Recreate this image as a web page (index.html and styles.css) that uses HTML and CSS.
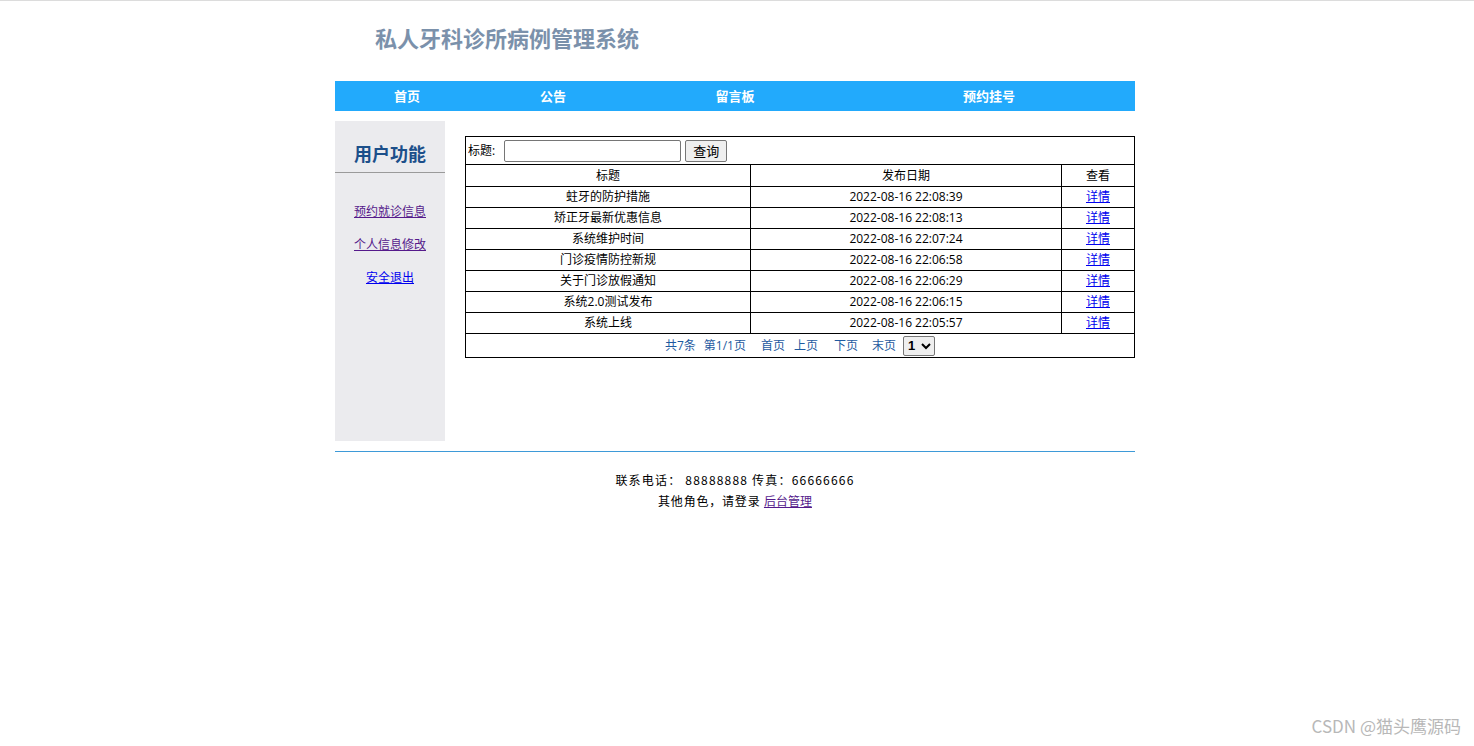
FILE: index.html
```html
<!DOCTYPE html>
<html lang="zh">
<head>
<meta charset="utf-8">
<title>私人牙科诊所病例管理系统</title>
<link rel="stylesheet" href="styles.css">
</head>
<body>
<div class="page">
  <div class="header"><h1 class="site-title">私人牙科诊所病例管理系统</h1></div>
  <div class="nav">
    <a class="nav-item n1" href="#">首页</a>
    <a class="nav-item n2" href="#">公告</a>
    <a class="nav-item n3" href="#">留言板</a>
    <a class="nav-item n4" href="#">预约挂号</a>
  </div>
  <div class="content">
    <div class="sidebar">
      <div class="side-title">用户功能</div>
      <div class="side-links">
        <a class="visited" href="#">预约就诊信息</a>
        <a class="visited" href="#">个人信息修改</a>
        <a class="fresh" href="#">安全退出</a>
      </div>
    </div>
    <div class="main">
      <table class="list">
        <tr class="search-row">
          <td colspan="3"><span class="lbl">标题:</span><input class="search-input" type="text"><button class="search-btn">查询</button></td>
        </tr>
        <tr class="head-row"><td class="c1">标题</td><td class="c2">发布日期</td><td class="c3">查看</td></tr>
        <tr><td>蛀牙的防护措施</td><td>2022-08-16 22:08:39</td><td><a href="#">详情</a></td></tr>
        <tr><td>矫正牙最新优惠信息</td><td>2022-08-16 22:08:13</td><td><a href="#">详情</a></td></tr>
        <tr><td>系统维护时间</td><td>2022-08-16 22:07:24</td><td><a href="#">详情</a></td></tr>
        <tr><td>门诊疫情防控新规</td><td>2022-08-16 22:06:58</td><td><a href="#">详情</a></td></tr>
        <tr><td>关于门诊放假通知</td><td>2022-08-16 22:06:29</td><td><a href="#">详情</a></td></tr>
        <tr><td>系统2.0测试发布</td><td>2022-08-16 22:06:15</td><td><a href="#">详情</a></td></tr>
        <tr><td>系统上线</td><td>2022-08-16 22:05:57</td><td><a href="#">详情</a></td></tr>
        <tr class="pager-row">
          <td colspan="3"><span class="pager"><span>共7条</span><span class="p2">第1/1页</span><span class="p3">首页</span><span class="p4">上页</span><span class="p5">下页</span><span class="p6">末页</span></span><select class="page-sel"><option>1</option></select></td>
        </tr>
      </table>
    </div>
  </div>
  <div class="footer">
    <p class="f1">联系电话： 88888888 传真：66666666</p>
    <p class="f2">其他角色，请登录 <a href="#">后台管理</a></p>
  </div>
</div>
<div class="watermark">CSDN @猫头鹰源码</div>
</body>
</html>
```
FILE: styles.css
```css
html, body { margin: 0; padding: 0; }
body {
  border-top: 1px solid #dcdcdc;
  font-family: "Noto Sans CJK SC", "Liberation Sans", sans-serif;
  font-size: 12px;
  color: #000;
  background: #fff;
  height: 745px;
  position: relative;
}
.page {
  width: 800px;
  margin-left: calc(50% - 402px);
}
.header {
  height: 80px;
  display: flex;
  align-items: flex-start;
}
.site-title {
  margin: 21px 0 0 40px;
  font-family: "Noto Sans CJK SC", serif;
  font-size: 22px;
  font-weight: bold;
  color: #7b91ab;
  line-height: 30px;
  letter-spacing: 0;
}
.nav {
  height: 30px;
  background: #22aafc;
  display: flex;
}
.nav-item {
  color: #fff;
  text-decoration: none;
  font-weight: bold;
  font-size: 13px;
  line-height: 29px;
  text-align: center;
}
.n1 { width: 144px; }
.n2 { width: 148px; }
.n3 { width: 216px; }
.n4 { width: 292px; }
.content {
  display: flex;
  margin-top: 10px;
  gap: 20px;
}
.sidebar {
  width: 110px;
  height: 320px;
  background: #ebebee;
}
.side-title {
  height: 51px;
  border-bottom: 1px solid #9a9a9a;
  text-align: center;
  font-size: 18px;
  font-weight: bold;
  color: #1c4f8a;
  line-height: 64px;
}
.side-links {
  display: flex;
  flex-direction: column;
  align-items: center;
  padding-top: 29px;
  gap: 15px;
}
.side-links a { font-size: 12px; line-height: 18px; }
.side-links .visited { color: #551a8b; }
.side-links .fresh { color: #0000ee; }
.main { padding-top: 15px; }
.list {
  width: 670px;
  border-collapse: collapse;
  border: 1px solid #000;
  font-family: "Open Sans", "Noto Sans CJK SC", sans-serif;
}
.list td {
  border: 1px solid #000;
  text-align: center;
  padding: 0;
  height: 20px;
  line-height: 18px;
  font-size: 12px;
}
.list a { color: #0000ee; }
.search-row td {
  text-align: left;
  height: 27px;
  padding-left: 2px;
}
.lbl { vertical-align: middle; margin-right: 9px; }
.search-input {
  width: 171px;
  height: 18px;
  border: 1px solid #767676;
  border-radius: 2px;
  margin: 0 4px 0 0;
  padding: 1px 2px;
  vertical-align: middle;
}
.search-btn {
  height: 22px;
  width: 42px;
  font-family: "Noto Sans CJK SC", sans-serif;
  font-size: 13px;
  padding: 0;
  line-height: 18px;
  border: 1px solid #767676;
  border-radius: 2px;
  background: #efefef;
  vertical-align: middle;
}
.head-row td { height: 21px; }
.c1 { width: 284px; }
.c2 { width: 310px; }
.pager-row td { height: 23px; }
.pager { color: #1e5aa0; display: inline-flex; vertical-align: middle; }
.pager .p2 { margin-left: 8px; }
.pager .p3 { margin-left: 15px; }
.pager .p4 { margin-left: 9px; }
.pager .p5 { margin-left: 16px; }
.pager .p6 { margin-left: 14px; }
.page-sel {
  margin-left: 7px;
  width: 32px;
  height: 20px;
  font-size: 13px;
  font-weight: bold;
  border: 1px solid #767676;
  border-radius: 2px;
  vertical-align: middle;
  padding: 0;
}
.footer {
  margin-top: 10px;
  border-top: 1px solid #3e9ad8;
  padding-top: 17px;
  text-align: center;
}
.footer p { margin: 0; line-height: 21px; font-size: 12px; }
.f1 { letter-spacing: 1.2px; }
.f2 { letter-spacing: 0.8px; }
.f2 a { color: #551a8b; letter-spacing: 0; }
.watermark {
  position: absolute;
  right: 13px;
  bottom: 8px;
  font-family: "Noto Sans CJK SC", sans-serif;
  font-size: 17px;
  color: #b8b8b8;
}
```
